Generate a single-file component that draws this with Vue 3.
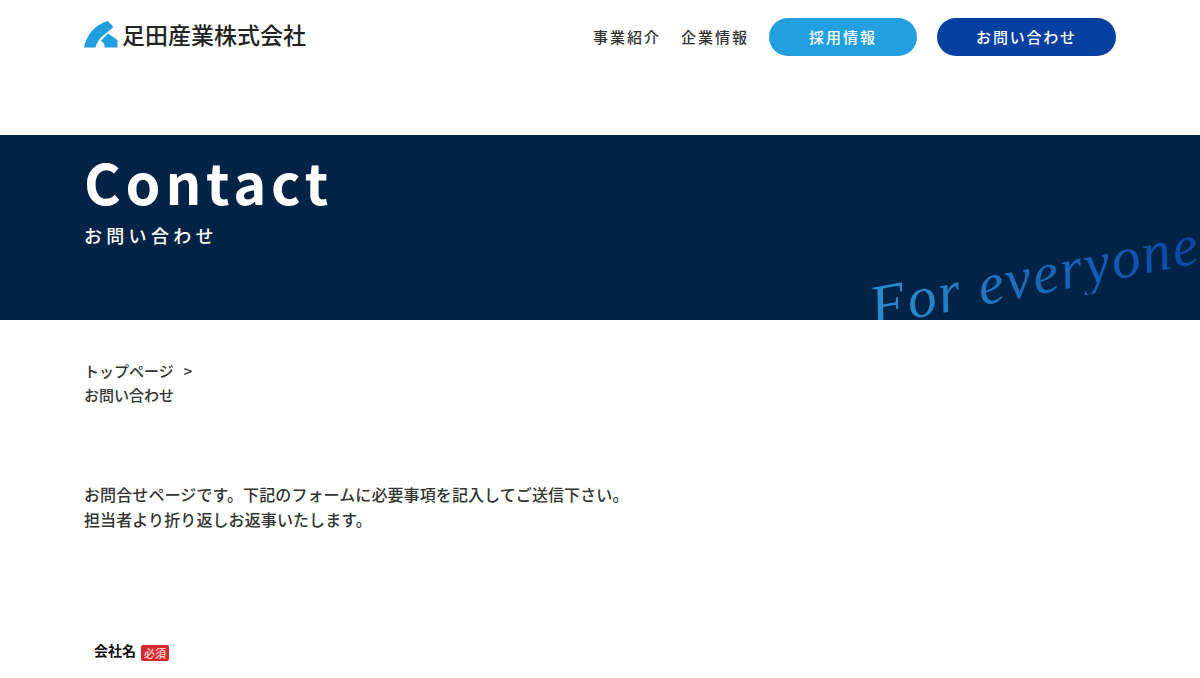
<template>
  <div class="page">
    <header class="site-header">
      <a class="logo">
        <svg class="logo-mark" viewBox="0 0 34 27" aria-hidden="true">
          <path d="M0 26.5C2.500 14 11 3 24 0L29.500 6L20.500 13.500C16 16.500 13 21 11.500 26.500Z" fill="#229fdf" />
          <path d="M24 12.500L33.500 19L33.500 26.500L20.500 26.500C21 24 19.500 21 16.500 20Z" fill="#229fdf" />
        </svg>
        <span class="logo-text">足田産業株式会社</span>
      </a>
      <nav class="nav">
        <a class="nav-link first">事業紹介</a>
        <a class="nav-link">企業情報</a>
        <a class="nav-btn recruit">採用情報</a>
        <a class="nav-btn contact">お問い合わせ</a>
      </nav>
    </header>

    <section class="hero">
      <h1>Contact</h1>
      <p>お問い合わせ</p>
      <span class="script">For everyone</span>
    </section>

    <main class="content">
      <ul class="crumbs">
        <li>トップページ<span class="sep">&gt;</span></li>
        <li>お問い合わせ</li>
      </ul>
      <p class="lead">
        お問合せページです。下記のフォームに必要事項を記入してご送信下さい。<br />
        担当者より折り返しお返事いたします。
      </p>
      <div class="field-label">
        <span>会社名</span>
        <em class="required">必須</em>
      </div>
    </main>
  </div>
</template>

<script setup>
</script>

<style>
html, body {
  margin: 0;
  background: #fff;
}
</style>

<style scoped>
.page {
  height: 678px;
  overflow: hidden;
  font-family: "Noto Sans CJK JP", "Noto Sans", sans-serif;
  color: #333;
}

/* header */
.site-header {
  height: 135px;
  box-sizing: border-box;
  padding: 18px 84px 0;
  display: flex;
  justify-content: space-between;
  align-items: flex-start;
}
.logo {
  display: flex;
  align-items: center;
  gap: 4px;
  height: 33px;
}
.logo-mark {
  width: 34px;
  height: 27px;
}
.logo-text {
  font-size: 23px;
  font-weight: 500;
  color: #222;
  line-height: 1;
}
.nav {
  display: flex;
  align-items: center;
  gap: 21px;
}
.nav-link {
  font-size: 15px;
  font-weight: 500;
  letter-spacing: 2px;
  color: #333;
  position: relative;
  top: -1px;
}
.first {
  margin-right: -1px;
}
.nav-btn {
  height: 38px;
  box-sizing: border-box;
  padding-bottom: 2px;
  border-radius: 19px;
  display: flex;
  align-items: center;
  justify-content: center;
  font-size: 15px;
  font-weight: 500;
  letter-spacing: 2px;
  color: #fff;
}
.recruit {
  width: 148px;
  margin-left: -1px;
  background: #229fdf;
}
.contact {
  width: 179px;
  margin-left: -1px;
  letter-spacing: 1.800px;
  background: #0640a1;
}

/* banner */
.hero {
  position: relative;
  height: 185px;
  box-sizing: border-box;
  padding: 11px 84px 0;
  background: #012346;
  color: #fff;
  overflow: hidden;
}
.hero h1 {
  margin: 0;
  font-size: 56px;
  font-weight: 700;
  line-height: 70px;
  letter-spacing: 4.800px;
}
.hero p {
  margin: 6px 0 0;
  font-size: 18px;
  font-weight: 500;
  line-height: 26px;
  letter-spacing: 4.300px;
}
.script {
  position: absolute;
  left: 876px;
  top: 143px;
  font-family: "Liberation Serif", serif;
  font-style: italic;
  font-size: 58px;
  line-height: 1;
  white-space: nowrap;
  letter-spacing: 2px;
  transform: rotate(-11deg);
  transform-origin: left bottom;
  background: linear-gradient(90deg, #2a8ed0, #0a46a8);
  -webkit-background-clip: text;
  background-clip: text;
  color: transparent;
}

/* body */
.content {
  padding: 39px 84px 0;
}
.crumbs {
  margin: 0;
  padding: 0;
  list-style: none;
  font-size: 15px;
  font-weight: 500;
  line-height: 24px;
  color: #333;
}
.sep {
  margin-left: 10px;
}
.lead {
  margin: 75px 0 0;
  font-size: 16px;
  font-weight: 500;
  letter-spacing: 0.100px;
  line-height: 25px;
  color: #333;
}
.field-label {
  margin: 108px 0 0 10px;
  display: flex;
  align-items: flex-start;
  gap: 5px;
  font-size: 14px;
  font-weight: 700;
  line-height: 20px;
  color: #111;
}
.required {
  width: 28px;
  height: 16px;
  margin-top: 5px;
  border-radius: 2px;
  background: #d9272e;
  color: #fff;
  font-size: 11px;
  font-style: normal;
  font-weight: 400;
  line-height: 16px;
  text-align: center;
}
</style>
